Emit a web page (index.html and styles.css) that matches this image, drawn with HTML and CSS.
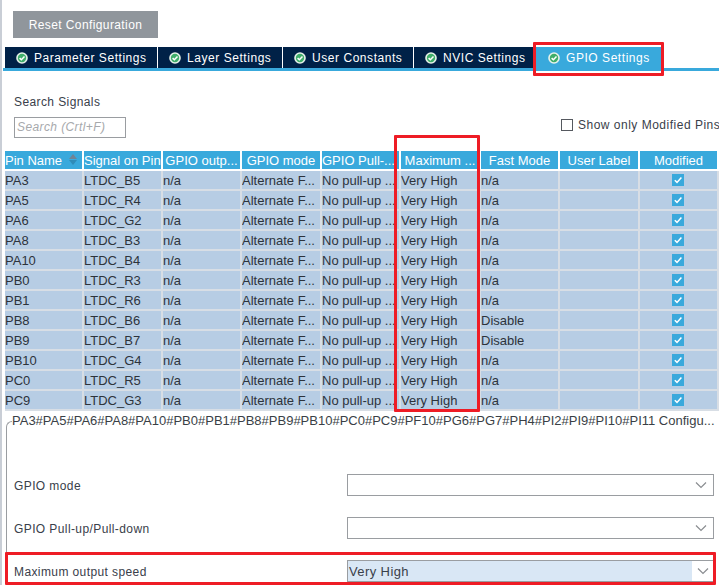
FILE: index.html
```html
<!DOCTYPE html>
<html lang="en">
<head>
<meta charset="utf-8">
<title>GPIO Settings</title>
<link rel="stylesheet" href="styles.css">
</head>
<body>
<svg class="defs" width="0" height="0"><defs>
<symbol id="ok" viewBox="0 0 12 12"><circle cx="6" cy="6" r="5.8" fill="#e6f2ea"/><circle cx="6" cy="6" r="4.2" fill="#3fae6a"/><path d="M3.6 6.1 5.4 7.8 8.5 4.5" fill="none" stroke="#fff" stroke-width="1.5"/></symbol>
<symbol id="chk" viewBox="0 0 12 12"><rect width="12" height="12" fill="#39a9dc"/><path d="M2.8 6.2 5 8.4 9.4 3.4" fill="none" stroke="#fff" stroke-width="1.5"/></symbol>
<symbol id="chev" viewBox="0 0 12 8"><path d="M1 1.5 6 6.5 11 1.5" fill="none" stroke="#8a8d91" stroke-width="1.2"/></symbol>
</defs></svg>
<div class="page">
  <button class="reset">Reset Configuration</button>
  <div class="tabs">
    <div class="tab w1"><svg class="ok"><use href="#ok"/></svg>Parameter Settings</div>
    <div class="tab w2"><svg class="ok"><use href="#ok"/></svg>Layer Settings</div>
    <div class="tab w3"><svg class="ok"><use href="#ok"/></svg>User Constants</div>
    <div class="tab w4"><svg class="ok"><use href="#ok"/></svg>NVIC Settings</div>
    <div class="tab active w5"><svg class="ok"><use href="#ok"/></svg>GPIO Settings</div>
  </div>
  <div class="search-label">Search Signals</div>
  <div class="search-row">
    <div class="search-input">Search (Crtl+F)</div>
    <label class="only"><span class="box"></span>Show only Modified Pins</label>
  </div>
  <div class="grid">
    <div class="hc first">Pin Name<span class="sort"><i class="up"></i><i class="down"></i></span></div>
    <div class="hc first">Signal on Pin</div>
    <div class="hc">GPIO outp...</div>
    <div class="hc">GPIO mode</div>
    <div class="hc left">GPIO Pull-...</div>
    <div class="hc">Maximum ...</div>
    <div class="hc">Fast Mode</div>
    <div class="hc">User Label</div>
    <div class="hc">Modified</div>

    <div>PA3</div><div>LTDC_B5</div><div>n/a</div><div>Alternate F...</div><div>No pull-up ...</div><div>Very High</div><div>n/a</div><div></div><div class="m"><svg class="chk"><use href="#chk"/></svg></div>
    <div>PA5</div><div>LTDC_R4</div><div>n/a</div><div>Alternate F...</div><div>No pull-up ...</div><div>Very High</div><div>n/a</div><div></div><div class="m"><svg class="chk"><use href="#chk"/></svg></div>
    <div>PA6</div><div>LTDC_G2</div><div>n/a</div><div>Alternate F...</div><div>No pull-up ...</div><div>Very High</div><div>n/a</div><div></div><div class="m"><svg class="chk"><use href="#chk"/></svg></div>
    <div>PA8</div><div>LTDC_B3</div><div>n/a</div><div>Alternate F...</div><div>No pull-up ...</div><div>Very High</div><div>n/a</div><div></div><div class="m"><svg class="chk"><use href="#chk"/></svg></div>
    <div>PA10</div><div>LTDC_B4</div><div>n/a</div><div>Alternate F...</div><div>No pull-up ...</div><div>Very High</div><div>n/a</div><div></div><div class="m"><svg class="chk"><use href="#chk"/></svg></div>
    <div>PB0</div><div>LTDC_R3</div><div>n/a</div><div>Alternate F...</div><div>No pull-up ...</div><div>Very High</div><div>n/a</div><div></div><div class="m"><svg class="chk"><use href="#chk"/></svg></div>
    <div>PB1</div><div>LTDC_R6</div><div>n/a</div><div>Alternate F...</div><div>No pull-up ...</div><div>Very High</div><div>n/a</div><div></div><div class="m"><svg class="chk"><use href="#chk"/></svg></div>
    <div>PB8</div><div>LTDC_B6</div><div>n/a</div><div>Alternate F...</div><div>No pull-up ...</div><div>Very High</div><div>Disable</div><div></div><div class="m"><svg class="chk"><use href="#chk"/></svg></div>
    <div>PB9</div><div>LTDC_B7</div><div>n/a</div><div>Alternate F...</div><div>No pull-up ...</div><div>Very High</div><div>Disable</div><div></div><div class="m"><svg class="chk"><use href="#chk"/></svg></div>
    <div>PB10</div><div>LTDC_G4</div><div>n/a</div><div>Alternate F...</div><div>No pull-up ...</div><div>Very High</div><div>n/a</div><div></div><div class="m"><svg class="chk"><use href="#chk"/></svg></div>
    <div>PC0</div><div>LTDC_R5</div><div>n/a</div><div>Alternate F...</div><div>No pull-up ...</div><div>Very High</div><div>n/a</div><div></div><div class="m"><svg class="chk"><use href="#chk"/></svg></div>
    <div>PC9</div><div>LTDC_G3</div><div>n/a</div><div>Alternate F...</div><div>No pull-up ...</div><div>Very High</div><div>n/a</div><div></div><div class="m"><svg class="chk"><use href="#chk"/></svg></div>
  </div>
  <fieldset class="config">
    <legend>PA3#PA5#PA6#PA8#PA10#PB0#PB1#PB8#PB9#PB10#PC0#PC9#PF10#PG6#PG7#PH4#PI2#PI9#PI10#PI11 Configu...</legend>
    <div class="form-row r1"><span class="lbl">GPIO mode</span><div class="sel"><svg class="chev"><use href="#chev"/></svg></div></div>
    <div class="form-row r2"><span class="lbl">GPIO Pull-up/Pull-down</span><div class="sel"><svg class="chev"><use href="#chev"/></svg></div></div>
    <div class="form-row r3"><span class="lbl">Maximum output speed</span><div class="sel filled"><span class="val">Very High</span><span class="arrow"><svg class="chev"><use href="#chev"/></svg></span></div></div>
  </fieldset>
  <div class="mark mark-tab"></div>
  <div class="mark mark-col"></div>
  <div class="mark mark-row"></div>
</div>
</body>
</html>
```
FILE: styles.css
```css
* { box-sizing: border-box; }
html, body { margin: 0; padding: 0; background: #fff; }
body { width: 719px; height: 585px; overflow: hidden; font-family: "Liberation Sans", Arial, sans-serif; font-size: 13px; color: #39404a; }
.defs { position: absolute; }
.page { position: relative; width: 719px; height: 585px; padding: 11px 0 0 1px; border-left: 2px solid #c9ced6; overflow: hidden; }
.reset { display: block; width: 145px; height: 27px; margin-left: 10px; border: 0; background: #90969c; color: #fff; font: 12px "Liberation Sans", Arial, sans-serif; letter-spacing: .4px; padding: 0; }
.tabs { display: flex; height: 24px; margin-top: 9px; padding-left: 2px; border-bottom: 3px solid #39a9dc; }
.tab { height: 21px; padding-left: 11px; display: flex; align-items: center; gap: 6px; background: #002147; color: #fff; font-size: 12px; letter-spacing: .55px; white-space: nowrap; border-right: 1px solid #fff; }
.w1 { width: 153px; } .w2 { width: 125px; } .w3 { width: 131px; } .w4 { width: 122px; }
.tab.active { width: 127px; height: 24px; padding-left: 12px; background: #39a9dc; border-right: 0; padding-bottom: 3px; }
.ok { width: 12px; height: 12px; flex: none; }
.search-label { margin: 24px 0 0 11px; font-size: 12px; letter-spacing: .4px; line-height: 15px; }
.search-row { display: flex; align-items: center; margin: 7px 0 0 11px; height: 21px; }
.search-input { width: 112px; height: 21px; flex: none; border: 1px solid #9a9da1; color: #a7a9ac; font-style: italic; font-size: 12px; letter-spacing: .4px; padding: 2px 0 0 2px; }
.only { display: flex; flex: none; align-items: center; margin-left: 435px; white-space: nowrap; font-size: 12px; letter-spacing: .5px; position: relative; top: -3px; }
.box { width: 12px; height: 12px; border: 1px solid #55595f; margin-right: 5px; background: #fff; flex: none; }
.grid { display: grid; grid-template-columns: 79px 79px 79px 80px 79px 80px 79px 80px 79px; grid-auto-rows: 20px; width: 716px; margin: 13px 0 0 2px; background: #b7cde4; font-size: 13px; line-height: 20px; color: #2d333b; }
.grid > div { border-right: 2px solid #d8dee5; border-bottom: 2px solid #d8dee5; padding-left: 0; white-space: nowrap; overflow: hidden; }
.grid > .hc { background: #39a9dc; color: #fff; text-align: center; border-color: #fff; padding: 0; position: relative; }
.grid > .hc.first, .grid > .hc.left { text-align: left; padding-left: 0; }
.sort { position: absolute; right: 5px; top: 3px; display: flex; flex-direction: column; gap: 1px; }
.up, .down { display: block; width: 0; height: 0; border-left: 4px solid transparent; border-right: 4px solid transparent; }
.up { border-bottom: 5px solid #6f8496; } .down { border-top: 5px solid #2f8cb8; }
.grid > .m { padding: 3px 0 0 32px; }
.chk { width: 12px; height: 12px; display: block; }
.config { width: 708px; height: 176px; margin: 2px 0 0 3px; padding: 0; border: 0; border-top: 1px solid #9a9da1; border-left: 1px solid #9a9da1; border-radius: 6px 0 0 0; }
.config legend { padding: 0; margin-left: 5px; font-size: 13px; line-height: 16px; white-space: nowrap; color: #3a3f46; }
.form-row { display: flex; align-items: center; margin-left: 7px; font-size: 12px; letter-spacing: .4px; }
.lbl { width: 333px; flex: none; padding-top: 2px; }
.sel { width: 367px; height: 22px; border: 1px solid #9a9da1; display: flex; justify-content: flex-end; align-items: center; padding-right: 6px; background: #fff; flex: none; }
.r1 { margin-top: 45px; } .r2 { margin-top: 21px; } .r3 { margin-top: 21px; }
.chev { width: 12px; height: 8px; display: block; }
.filled { justify-content: space-between; padding: 0; background: #d9e7f5; }
.val { padding-left: 1px; font-size: 13px; }
.arrow { width: 21px; height: 100%; background: #fff; display: flex; align-items: center; justify-content: center; }
.mark { position: absolute; border: 3px solid #ee1c25; border-radius: 1px; pointer-events: none; }
.mark-tab { left: 531px; top: 42px; width: 131px; height: 34px; }
.mark-col { left: 392px; top: 135px; width: 86px; height: 277px; }
.mark-row { left: 3px; top: 552px; width: 711px; height: 33px; }
```
